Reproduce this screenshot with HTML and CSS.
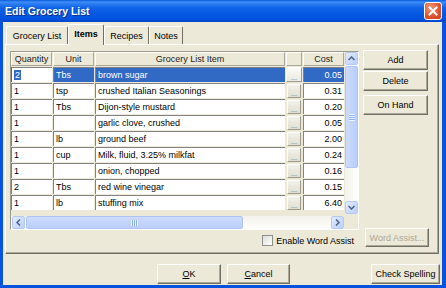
FILE: index.html
```html
<!DOCTYPE html>
<html>
<head>
    <title>Edit Grocery List</title>
    <link rel="stylesheet" href="styles.css">
</head>
<body>
    <div class="window">
        <div class="titlebar">
            <span class="title">Edit Grocery List</span>
            <div class="close-btn">
                <svg width="10" height="10" viewBox="0 0 10 10"><path d="M1.5 1.5 L8.5 8.5 M8.5 1.5 L1.5 8.5" stroke="#fff" stroke-width="2" stroke-linecap="square"/></svg>
            </div>
        </div>
        <div class="client">
            <div class="tabs">
                <div class="tab tab-list">Grocery List</div>
                <div class="tab tab-items active">Items</div>
                <div class="tab tab-recipes">Recipes</div>
                <div class="tab tab-notes">Notes</div>
            </div>
            <div class="panel">
                <div class="panel-main">
                    <div class="grid-frame">
                        <div class="grid-top">
                            <div class="table">
                                <div class="head">Quantity</div>
                                <div class="head">Unit</div>
                                <div class="head">Grocery List Item</div>
                                <div class="head"></div>
                                <div class="head">Cost</div>

                                <div class="cell qty current"><span class="caret">2</span></div>
                                <div class="cell sel">Tbs</div>
                                <div class="cell sel">brown sugar</div>
                                <div class="dots focus"><span>...</span></div>
                                <div class="cell cost sel">0.05</div>

                                <div class="cell qty">1</div>
                                <div class="cell">tsp</div>
                                <div class="cell">crushed Italian Seasonings</div>
                                <div class="dots"><span>...</span></div>
                                <div class="cell cost">0.31</div>

                                <div class="cell qty">1</div>
                                <div class="cell">Tbs</div>
                                <div class="cell">Dijon-style mustard</div>
                                <div class="dots"><span>...</span></div>
                                <div class="cell cost">0.20</div>

                                <div class="cell qty">1</div>
                                <div class="cell"></div>
                                <div class="cell">garlic clove, crushed</div>
                                <div class="dots"><span>...</span></div>
                                <div class="cell cost">0.05</div>

                                <div class="cell qty">1</div>
                                <div class="cell">lb</div>
                                <div class="cell">ground beef</div>
                                <div class="dots"><span>...</span></div>
                                <div class="cell cost">2.00</div>

                                <div class="cell qty">1</div>
                                <div class="cell">cup</div>
                                <div class="cell">Milk, fluid, 3.25% milkfat</div>
                                <div class="dots"><span>...</span></div>
                                <div class="cell cost">0.24</div>

                                <div class="cell qty">1</div>
                                <div class="cell"></div>
                                <div class="cell">onion, chopped</div>
                                <div class="dots"><span>...</span></div>
                                <div class="cell cost">0.16</div>

                                <div class="cell qty">2</div>
                                <div class="cell">Tbs</div>
                                <div class="cell">red wine vinegar</div>
                                <div class="dots"><span>...</span></div>
                                <div class="cell cost">0.15</div>

                                <div class="cell qty">1</div>
                                <div class="cell">lb</div>
                                <div class="cell">stuffing mix</div>
                                <div class="dots"><span>...</span></div>
                                <div class="cell cost">6.40</div>
                            </div>
                            <div class="vscroll">
                                <div class="sb-btn">
                                    <svg width="7" height="5" viewBox="0 0 7 5"><path d="M0.5 4 L3.5 1 L6.5 4" fill="none" stroke="#4D6185" stroke-width="1.5"/></svg>
                                </div>
                                <div class="thumb vthumb"><span class="grip"></span></div>
                                <div class="track"></div>
                                <div class="sb-btn">
                                    <svg width="7" height="5" viewBox="0 0 7 5"><path d="M0.5 1 L3.5 4 L6.5 1" fill="none" stroke="#4D6185" stroke-width="1.5"/></svg>
                                </div>
                            </div>
                        </div>
                        <div class="grid-bottom">
                            <div class="hscroll">
                                <div class="sb-btn">
                                    <svg width="5" height="7" viewBox="0 0 5 7"><path d="M4 0.5 L1 3.5 L4 6.5" fill="none" stroke="#4D6185" stroke-width="1.5"/></svg>
                                </div>
                                <div class="thumb hthumb"><span class="grip"></span></div>
                                <div class="track"></div>
                                <div class="sb-btn">
                                    <svg width="5" height="7" viewBox="0 0 5 7"><path d="M1 0.5 L4 3.5 L1 6.5" fill="none" stroke="#4D6185" stroke-width="1.5"/></svg>
                                </div>
                            </div>
                            <div class="corner"></div>
                        </div>
                    </div>
                    <div class="side-buttons">
                        <button class="btn btn-add">Add</button>
                        <button class="btn btn-delete">Delete</button>
                        <button class="btn btn-onhand">On Hand</button>
                    </div>
                </div>
                <div class="assist-row">
                    <label class="check"><span class="box"></span>Enable Word Assist</label>
                    <button class="btn btn-assist" disabled>Word Assist...</button>
                </div>
            </div>
            <div class="footer">
                <button class="btn btn-ok"><u>O</u>K</button>
                <button class="btn btn-cancel"><u>C</u>ancel</button>
                <button class="btn btn-spell">Check Spelling</button>
            </div>
        </div>
    </div>
</body>
</html>
```

FILE: styles.css
```css
body {
    margin: 0;
    font-family: "Liberation Sans", Arial, sans-serif;
    font-size: 9px;
    color: #000;
}
.window {
    width: 446px;
    height: 288px;
    background: #0853DE;
    display: flex;
    flex-direction: column;
}
.titlebar {
    height: 22px;
    flex-shrink: 0;
    display: flex;
    align-items: center;
    padding: 0 4px 0 5px;
    background: linear-gradient(to bottom, #0A5AD8 0px, #3D8EF8 2px, #2B7BF1 4px, #0E62E6 8px, #0459E3 14px, #0252DD 19px, #0046C9 22px);
}
.title {
    flex: 1;
    color: #fff;
    font-weight: bold;
    font-size: 10.5px;
    text-shadow: 1px 1px #0A2F90;
}
.close-btn {
    width: 18px;
    height: 18px;
    box-sizing: border-box;
    border: 1px solid #fff;
    border-radius: 3px;
    background: radial-gradient(circle at 35% 30%, #F09A7E, #E0552F 55%, #C8401C);
    display: flex;
    align-items: center;
    justify-content: center;
}
.client {
    margin: 0 4px 3px 3px;
    height: 263px;
    background: #ECE9D8;
}

/* tabs */
.tabs {
    height: 22px;
    display: flex;
    align-items: flex-end;
    padding-left: 3px;
}
.tab {
    height: 18px;
    box-sizing: border-box;
    border: 1px solid;
    border-color: #fff #716F64 transparent #fff;
    border-bottom: none;
    border-radius: 2px 2px 0 0;
    display: flex;
    align-items: center;
    justify-content: center;
    padding-top: 1px;
}
.tab-list {
    width: 62px;
}
.tab-items {
    width: 36px;
}
.tab-recipes {
    width: 45px;
}
.tab-notes {
    width: 34px;
}
.tab.active {
    height: 21px;
    margin-bottom: -1px;
    background: #ECE9D8;
    font-weight: bold;
    position: relative;
    padding-top: 0;
    padding-bottom: 2px;
}

/* tab page */
.panel {
    margin-left: 2px;
    width: 434px;
    height: 210px;
    box-sizing: border-box;
    border: 1px solid;
    border-color: #fff #716F64 #716F64 #fff;
    box-shadow: inset -1px -1px #ACA899;
    padding: 6px 0 0 4px;
}
.panel-main {
    display: flex;
    align-items: flex-start;
}
.grid-frame {
    width: 349px;
    height: 179px;
    box-sizing: border-box;
    border: 1px solid;
    border-color: #9D9A8C #fff #fff #9D9A8C;
    background: #ECE9D8;
    display: flex;
    flex-direction: column;
}
.grid-top {
    height: 162px;
    display: flex;
}
.table {
    width: 333px;
    height: 158px;
    display: grid;
    grid-template-columns: 41px 41px 190px 16px 41px;
    grid-template-rows: 14px repeat(9, 15px);
    gap: 1px;
}
.head {
    box-sizing: border-box;
    border: 1px solid;
    border-color: #fff #ACA899 #ACA899 #fff;
    display: flex;
    align-items: center;
    justify-content: center;
    white-space: nowrap;
    color: #222;
}
.cell {
    box-sizing: border-box;
    background: #fff;
    border-top: 1px solid #848284;
    border-left: 1px solid #848284;
    padding-left: 2px;
    line-height: 14px;
    white-space: nowrap;
    overflow: hidden;
}
.cell.cost {
    text-align: right;
    padding-right: 2px;
}
.cell.sel {
    background: #316AC5;
    color: #fff;
}
.cell.current {
    border-left-color: #316AC5;
}
.caret {
    background: #316AC5;
    color: #fff;
    padding: 0 1px;
}
.dots {
    box-sizing: border-box;
    margin: 1px 1px 0 1px;
    background: linear-gradient(#F2F1EA, #E2DFD0);
    border: 1px solid;
    border-color: #fff #9D9A8C #9D9A8C #fff;
    display: flex;
    align-items: flex-end;
    justify-content: center;
    font-size: 7px;
    line-height: 7px;
    color: #666;
}
.dots.focus {
    margin: 0;
    background: linear-gradient(#FAFAF6, #ECEAE0);
}

/* scrollbars */
.vscroll {
    width: 13px;
    margin-left: 1px;
    display: flex;
    flex-direction: column;
    background: linear-gradient(to right, #F3F2EC, #FEFEFB);
}
.sb-btn {
    width: 13px;
    height: 13px;
    flex-shrink: 0;
    box-sizing: border-box;
    background: linear-gradient(135deg, #E3EBFE, #BCCFF9);
    border: 1px solid #B5C9F5;
    border-radius: 2px;
    display: flex;
    align-items: center;
    justify-content: center;
}
.thumb {
    box-sizing: border-box;
    border: 1px solid #AFC4F5;
    border-radius: 2px;
    display: flex;
    align-items: center;
    justify-content: center;
}
.vthumb {
    height: 102px;
    margin-top: 1px;
    background: linear-gradient(to right, #CDDBFD, #BACEF9);
}
.vthumb .grip {
    width: 6px;
    height: 7px;
    background: repeating-linear-gradient(to bottom, #EEF4FE 0 1px, #8CB0F8 1px 2px);
}
.track {
    flex: 1;
}
.grid-bottom {
    margin-top: 2px;
    height: 13px;
    display: flex;
}
.hscroll {
    width: 333px;
    display: flex;
    background: linear-gradient(to bottom, #F3F2EC, #FEFEFB);
}
.hscroll .sb-btn:first-child {
    margin-left: 1px;
}
.hthumb {
    width: 217px;
    margin-left: 1px;
    background: linear-gradient(to bottom, #CDDBFD, #BACEF9);
}
.hthumb .grip {
    width: 7px;
    height: 6px;
    background: repeating-linear-gradient(to right, #EEF4FE 0 1px, #8CB0F8 1px 2px);
}
.corner {
    width: 13px;
    margin-left: 1px;
}

/* buttons */
.btn {
    font: inherit;
    height: 20px;
    padding: 0;
    box-sizing: border-box;
    background: #ECE9D8;
    border: 1px solid;
    border-color: #fff #716F64 #716F64 #fff;
    box-shadow: inset -1px -1px #ACA899;
    color: #000;
}
.btn[disabled] {
    color: #ACA899;
}
.side-buttons {
    margin: -1px 0 0 4px;
    width: 65px;
    display: flex;
    flex-direction: column;
}
.btn-delete {
    margin-top: 1px;
}
.btn-onhand {
    margin-top: 4px;
}
.assist-row {
    display: flex;
    align-items: flex-start;
    justify-content: flex-end;
    padding-right: 9px;
}
.check {
    display: flex;
    align-items: center;
    margin-top: 5px;
    margin-right: 11px;
    height: 11px;
}
.check .box {
    width: 11px;
    height: 11px;
    box-sizing: border-box;
    border: 1px solid #8E8F8F;
    background: linear-gradient(135deg, #DCDCD7, #fff);
    margin-right: 3px;
}
.btn-assist {
    width: 64px;
    height: 19px;
    margin-top: -2px;
}
.footer {
    display: flex;
    padding: 10px 2px 0 154px;
}
.btn-ok {
    width: 64px;
}
.btn-cancel {
    width: 63px;
    margin-left: 6px;
}
.btn-spell {
    width: 69px;
    margin-left: auto;
}
```
